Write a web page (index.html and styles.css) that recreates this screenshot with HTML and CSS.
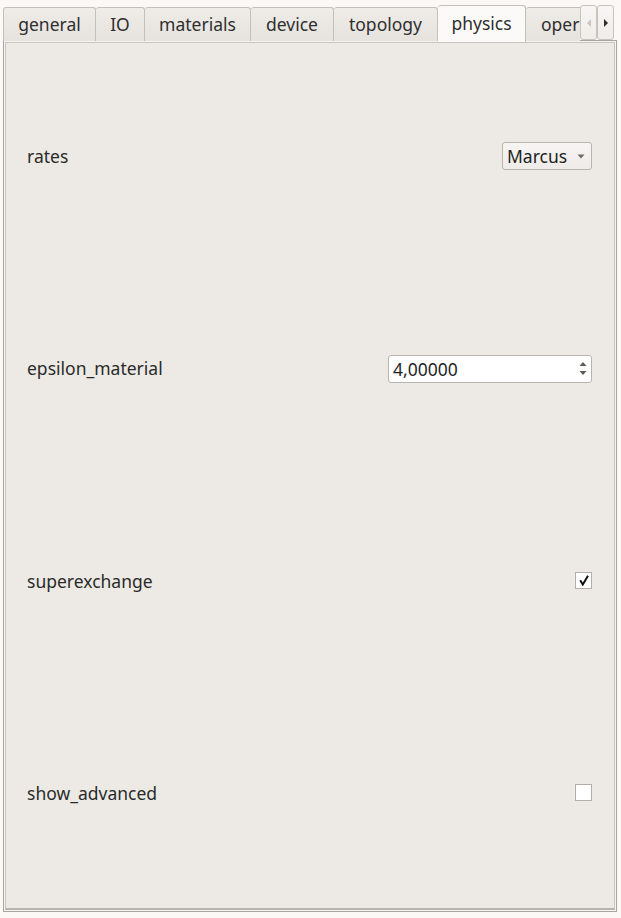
FILE: index.html
```html
<!DOCTYPE html>
<html>
<head>
<meta charset="utf-8">
<link rel="stylesheet" href="styles.css">
</head>
<body>
<div class="window">
  <div class="tabbar">
    <div class="tab w-general">general</div>
    <div class="tab w-io">IO</div>
    <div class="tab w-materials">materials</div>
    <div class="tab w-device">device</div>
    <div class="tab w-topology">topology</div>
    <div class="tab active w-physics">physics</div>
    <div class="tab clipped w-oper">oper</div>
    <div class="scrollbtn">
      <svg width="8" height="10" viewBox="0 0 8 10"><path d="M6 1 L2 5 L6 9 Z" fill="#c9c5c0"/></svg>
    </div>
    <div class="scrollbtn">
      <svg width="8" height="10" viewBox="0 0 8 10"><path d="M2 1 L6 5 L2 9 Z" fill="#2e2e2e"/></svg>
    </div>
  </div>
  <div class="panel">
    <div class="panel-inner">
      <div class="row">
        <span class="label">rates</span>
        <div class="combo">
          <span>Marcus</span>
          <svg width="8" height="5" viewBox="0 0 8 5"><path d="M0.5 0.5 L7.5 0.5 L4 4.5 Z" fill="#6f6b67"/></svg>
        </div>
      </div>
      <div class="row">
        <span class="label">epsilon_material</span>
        <div class="spin">
          <span class="spin-text">4,00000</span>
          <div class="spin-btns">
            <svg width="8" height="6" viewBox="0 0 8 6"><path d="M0.5 5 L7.5 5 L4 1 Z" fill="#5e5a56"/></svg>
            <svg width="8" height="6" viewBox="0 0 8 6"><path d="M0.5 1 L7.5 1 L4 5 Z" fill="#5e5a56"/></svg>
          </div>
        </div>
      </div>
      <div class="row">
        <span class="label">superexchange</span>
        <div class="check">
          <svg width="12" height="12" viewBox="0 0 12 12"><path d="M2.2 6.2 L4.8 10.5 L10 1.8" fill="none" stroke="#111" stroke-width="2"/></svg>
        </div>
      </div>
      <div class="row">
        <span class="label">show_advanced</span>
        <div class="check"></div>
      </div>
    </div>
  </div>
</div>
</body>
</html>
```

FILE: styles.css
```css
* { box-sizing: border-box; }
html, body {
  margin: 0;
  padding: 0;
  background: #fcf8f5;
  font-family: "Noto Sans", "Open Sans", sans-serif;
  color: #2a2a2a;
}
.window {
  width: 621px;
  height: 918px;
  padding: 5px 4px 0 3px;
  display: flex;
  flex-direction: column;
}
.tabbar {
  display: flex;
  align-items: flex-end;
  height: 36px;
  position: relative;
  z-index: 2;
}
.tab {
  height: 34px;
  border: 1px solid #c4bfb9;
  border-left: none;
  border-bottom: none;
  border-radius: 3px 3px 0 0;
  background: linear-gradient(#efece8, #e6e3df);
  font-size: 17.5px;
  line-height: 32px;
  text-align: center;
  color: #2f2f2f;
  white-space: nowrap;
  overflow: hidden;
}
.tab.w-general { border-left: 1px solid #c4bfb9; }
.w-general { width: 93px; }
.w-io { width: 49px; }
.w-materials { width: 106px; }
.w-device { width: 83px; }
.w-topology { width: 104px; }
.w-physics { width: 88px; }
.w-oper { width: 54px; }
.tab.active {
  height: 37px;
  margin-bottom: -1px;
  background: #fbfaf9;
  line-height: 34px;
}
.tab.clipped {
  text-align: left;
  padding-left: 15px;
  border-right: none;
  border-radius: 3px 0 0 0;
}
.scrollbtn {
  width: 17px;
  height: 35px;
  align-self: flex-start;
  border: 1px solid #c8c3bd;
  border-radius: 3px;
  background: linear-gradient(#f8f6f4, #efece9);
  display: flex;
  align-items: flex-start;
  justify-content: center;
  padding-top: 12px;
}
.panel {
  width: 614px;
  height: 872px;
  border: 1px solid #a9a49f;
  padding: 1px;
  background: #f6f3f0;
  margin-top: -1px;
}
.panel-inner {
  height: 100%;
  border: 1px solid #c9c4be;
  border-bottom: 2px solid #b7b2ad;
  background: #edeae5;
  padding: 7px 22px 9px 21px;
  display: flex;
  flex-direction: column;
}
.row {
  flex: 1;
  display: flex;
  align-items: center;
  justify-content: space-between;
}
.label {
  font-size: 17.5px;
  color: #2a2a2a;
}
.combo {
  width: 90px;
  height: 28px;
  border: 1px solid #b9b4ae;
  border-radius: 3px;
  background: linear-gradient(#f7f5f3, #eeebe8);
  display: flex;
  align-items: center;
  justify-content: space-between;
  padding: 0 6px 0 4px;
  font-size: 17.5px;
  color: #1f1f1f;
  margin-top: -1px;
}
.combo svg { margin-top: 1px; }
.spin {
  width: 204px;
  height: 28px;
  border: 1px solid #b9b4ae;
  border-radius: 3px;
  background: #ffffff;
  display: flex;
  align-items: center;
  justify-content: space-between;
  padding: 0 4px 0 4px;
  font-size: 17.5px;
  color: #1f1f1f;
  margin-top: 1px;
}
.spin-btns {
  display: flex;
  flex-direction: column;
  gap: 3px;
  padding-left: 5px;
  height: 100%;
  justify-content: center;
}
.check {
  width: 17px;
  height: 17px;
  border: 1px solid #b3aea9;
  background: #ffffff;
  display: flex;
  align-items: center;
  justify-content: center;
  margin-top: -1px;
}
```
